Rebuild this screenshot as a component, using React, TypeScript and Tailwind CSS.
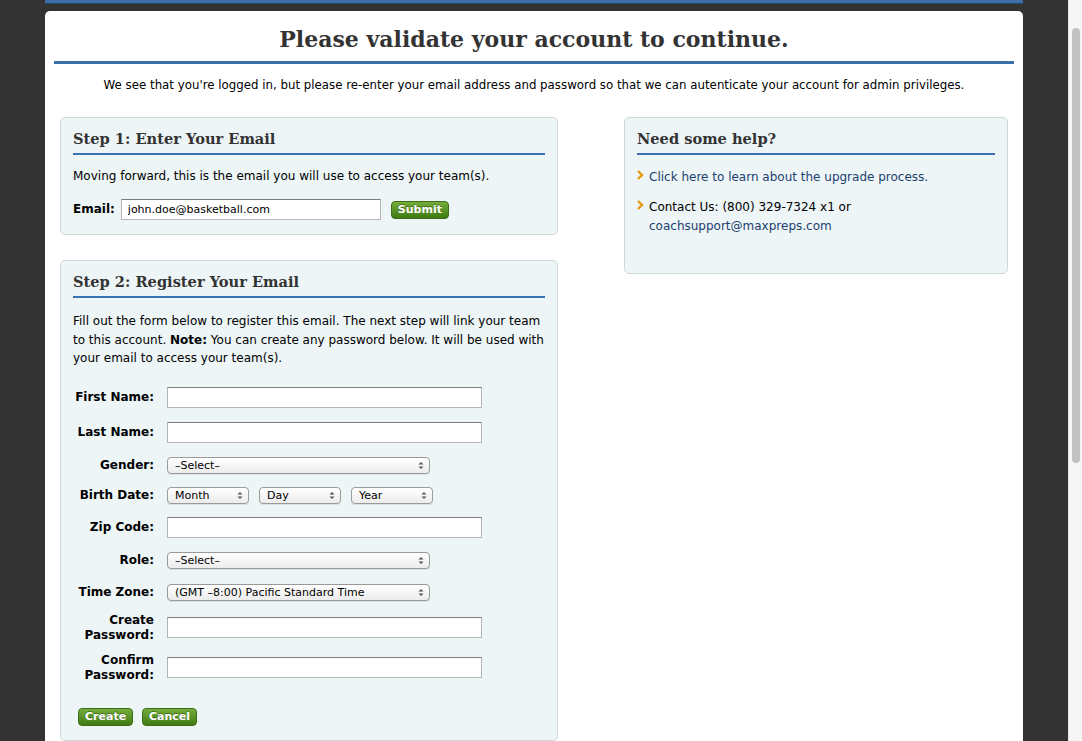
import React from "react";

const sans = { fontFamily: '"DejaVu Sans", Verdana, sans-serif' };
const serif = { fontFamily: '"DejaVu Serif", Georgia, serif' };

function GreenButton({ children, className = "" }: { children: React.ReactNode; className?: string }) {
  return (
    <button
      className={`h-[18px] shrink-0 rounded-[4px] border border-[#3d6e15] bg-gradient-to-b from-[#74ad3a] to-[#3f7b12] px-[6px] text-[11px] font-bold leading-[16px] text-white [text-shadow:0_-1px_0_rgba(0,0,0,0.35)] ${className}`}
      style={sans}
    >
      {children}
    </button>
  );
}

function TextInput({ value = "", className = "w-[315px]" }: { value?: string; className?: string }) {
  return (
    <input
      type="text"
      defaultValue={value}
      className={`${className} block h-[21px] shrink-0 border border-[#b5b5b5] border-t-[#7d7d7d] bg-white px-[6px] text-[11px] text-black outline-none`}
      style={sans}
    />
  );
}

function FakeSelect({ label, w }: { label: string; w: string }) {
  return (
    <div
      className={`${w} flex h-[17px] items-center justify-between rounded-[4px] border border-[#9a9a9a] bg-gradient-to-b from-white to-[#ececec] pl-[7px] pr-[5px] text-[11px] leading-none text-black shadow-[0_1px_0_rgba(0,0,0,0.08)]`}
      style={sans}
    >
      <span>{label}</span>
      <svg width="6" height="9" viewBox="0 0 6 9">
        <path d="M0.5 3.5 L3 1 L5.5 3.5 Z" fill="#555" />
        <path d="M0.5 5.5 L3 8 L5.5 5.5 Z" fill="#555" />
      </svg>
    </div>
  );
}

function Row({ label, children, className = "" }: { label: React.ReactNode; children: React.ReactNode; className?: string }) {
  return (
    <div className={`flex items-center ${className}`}>
      <div className="w-[80px] shrink-0 text-right text-[12px] font-bold leading-[15px] text-black">{label}</div>
      <div className="ml-[13px] flex items-center gap-[10px]">{children}</div>
    </div>
  );
}

function BoxTitle({ children }: { children: React.ReactNode }) {
  return (
    <h2
      className="border-b-2 border-[#3a73b4] pb-[3px] text-[14.6px] font-bold leading-[22px] text-[#333]"
      style={serif}
    >
      {children}
    </h2>
  );
}

function Arrow() {
  return (
    <svg width="7" height="10" viewBox="0 0 7 10" className="mt-[2px] shrink-0">
      <path d="M1 1 L5 5 L1 9" stroke="#e59a12" strokeWidth="2.4" fill="none" />
    </svg>
  );
}

export default function App() {
  return (
    <div className="flex h-[741px] w-full overflow-hidden bg-[#333333]" style={sans}>
      <div className="w-[1068px] shrink-0">
        <div className="ml-[45px] w-[978px]">
          <div className="h-[3px] bg-[#3f6ea6] shadow-[0_1px_0_#25466e]" />
          <div className="mt-[8px] h-[730px] rounded-t-[5px] bg-white px-[9px] pt-[14px]">
            <h1
              className="border-b-[3px] border-[#3a6fa9] pb-[8px] text-center text-[22px] font-bold leading-[28px] text-[#333]"
              style={serif}
            >
              Please validate your account to continue.
            </h1>
            <p className="mt-[13px] text-center text-[11.8px] leading-[16px] text-black">
              We see that you're logged in, but please re-enter your email address and password so that we can autenticate your account for admin privileges.
            </p>

            <div className="mt-[24px] flex gap-[66px] pl-[6px]">
              <div className="flex w-[498px] flex-col gap-[25px]">
                <section className="rounded-[5px] border border-[#cfd9dc] bg-[#edf5f7] px-[12px] pt-[10px] pb-[14px]">
                  <BoxTitle>Step 1: Enter Your Email</BoxTitle>
                  <p className="mt-[13px] text-[12px] leading-[16px] text-black">
                    Moving forward, this is the email you will use to access your team(s).
                  </p>
                  <div className="mt-[15px] flex items-center">
                    <span className="text-[12px] font-bold leading-[15px] text-black">Email:</span>
                    <TextInput value="john.doe@basketball.com" className="ml-[6px] w-[260px]" />
                    <GreenButton className="ml-[10px] px-[5px]">Submit</GreenButton>
                  </div>
                </section>

                <section className="rounded-[5px] border border-[#cfd9dc] bg-[#edf5f7] pt-[10px] pb-[14px]">
                  <div className="px-[12px]">
                    <BoxTitle>Step 2: Register Your Email</BoxTitle>
                    <p className="mt-[14px] text-[12px] leading-[18.5px] text-black">
                      Fill out the form below to register this email. The next step will link your team to this account.{" "}
                      <strong>Note:</strong> You can create any password below. It will be used with your email to access your team(s).
                    </p>
                  </div>
                  <div className="flex flex-col pl-[13px]">
                    <Row label="First Name:" className="mt-[19px]">
                      <TextInput />
                    </Row>
                    <Row label="Last Name:" className="mt-[14px]">
                      <TextInput />
                    </Row>
                    <Row label="Gender:" className="mt-[14px]">
                      <FakeSelect label="–Select–" w="w-[263px]" />
                    </Row>
                    <Row label="Birth Date:" className="mt-[13px]">
                      <FakeSelect label="Month" w="w-[82px]" />
                      <FakeSelect label="Day" w="w-[82px]" />
                      <FakeSelect label="Year" w="w-[82px]" />
                    </Row>
                    <Row label="Zip Code:" className="mt-[13px]">
                      <TextInput />
                    </Row>
                    <Row label="Role:" className="mt-[14px]">
                      <FakeSelect label="–Select–" w="w-[263px]" />
                    </Row>
                    <Row label="Time Zone:" className="mt-[15px]">
                      <FakeSelect label="(GMT –8:00) Pacific Standard Time" w="w-[263px]" />
                    </Row>
                    <Row label={<>Create<br />Password:</>} className="mt-[12px]">
                      <TextInput />
                    </Row>
                    <Row label={<>Confirm<br />Password:</>} className="mt-[10px]">
                      <TextInput />
                    </Row>
                    <div className="mt-[25px] flex gap-[9px] pl-[4px]">
                      <GreenButton className="w-[55px]">Create</GreenButton>
                      <GreenButton className="w-[55px]">Cancel</GreenButton>
                    </div>
                  </div>
                </section>
              </div>

              <section className="h-[157px] w-[384px] rounded-[5px] border border-[#cfd9dc] bg-[#edf5f7] px-[12px] pt-[10px]">
                <BoxTitle>Need some help?</BoxTitle>
                <ul className="mt-[13px] flex flex-col gap-[11px] text-[12px] leading-[19px]">
                  <li className="flex items-start gap-[5px]">
                    <Arrow />
                    <a className="text-[#1c3f6e]">Click here to learn about the upgrade process.</a>
                  </li>
                  <li className="flex items-start gap-[5px]">
                    <Arrow />
                    <span className="text-black">
                      Contact Us: (800) 329-7324 x1 or
                      <br />
                      <a className="text-[#1c3f6e]">coachsupport@maxpreps.com</a>
                    </span>
                  </li>
                </ul>
              </section>
            </div>
          </div>
        </div>
      </div>
      <div className="flex w-[14px] shrink-0 justify-center border-l border-[#e6e6e6] bg-[#f6f6f6] pt-[28px]">
        <div className="h-[435px] w-[8px] rounded-full bg-[#c2c2c2]" />
      </div>
    </div>
  );
}
